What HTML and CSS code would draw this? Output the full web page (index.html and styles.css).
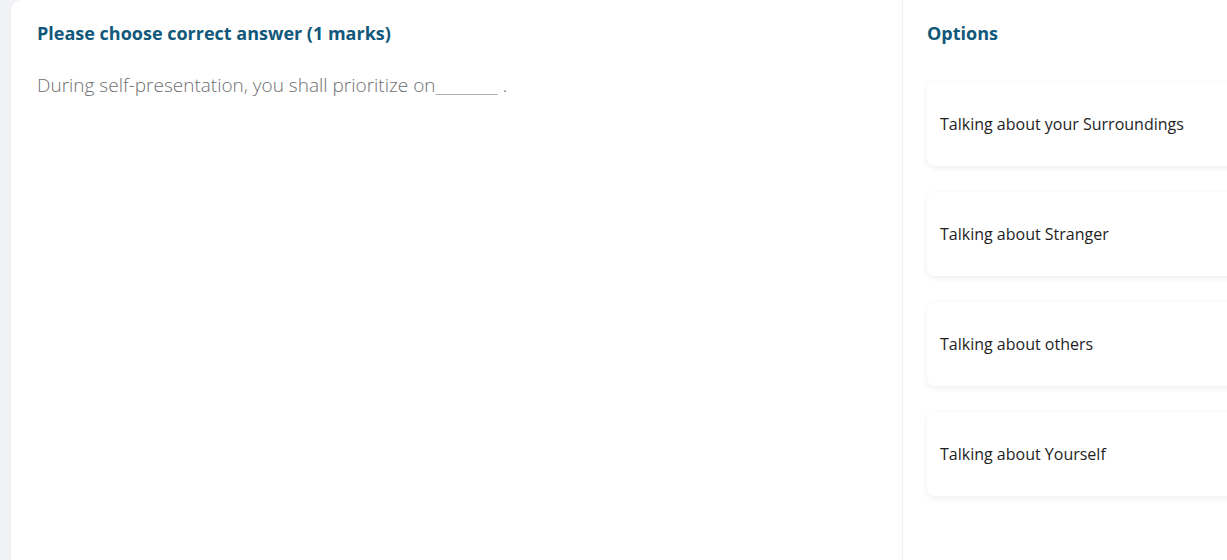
FILE: index.html
```html
<!DOCTYPE html>
<html lang="en">
<head>
  <meta charset="UTF-8">
  <title>Question</title>
  <link rel="stylesheet" href="styles.css">
</head>
<body>

  <div class="quiz">
    <div class="question-panel">
      <h2 class="panel-title">Please choose correct answer (1 marks)</h2>
      <p class="question-text">During self-presentation, you shall prioritize on________ .</p>
    </div>

    <div class="options-panel">
      <h2 class="panel-title">Options</h2>
      <div class="option-list">
        <div class="option">Talking about your Surroundings</div>
        <div class="option">Talking about Stranger</div>
        <div class="option">Talking about others</div>
        <div class="option">Talking about Yourself</div>
      </div>
    </div>
  </div>

</body>
</html>
```

FILE: styles.css
```css
html, body {
  height: 100%;
}
body {
  margin: 0;
  padding-left: 11px;
  background-color: #f0f2f5;
  font-family: "Open Sans", Arial, sans-serif;
  overflow: hidden;
}
.quiz {
  display: flex;
  height: 100%;
  width: 1240px;
  background-color: #fff;
  border-top-left-radius: 10px;
}
.question-panel {
  width: 891px;
  padding: 21px 26px;
  box-sizing: border-box;
}
.options-panel {
  flex: 1;
  border-left: 1px solid #eef0f2;
  padding: 21px 0 0 24px;
}
.panel-title {
  margin: 0;
  font-size: 18px;
  font-weight: 700;
  color: #11587a;
  line-height: 24px;
}
.question-text {
  margin: 28px 0 0;
  font-size: 19px;
  font-weight: 300;
  color: #707070;
  line-height: 24px;
}
.option-list {
  display: flex;
  flex-direction: column;
  gap: 26px;
  margin-top: 37px;
}
.option {
  height: 84px;
  display: flex;
  align-items: center;
  padding-left: 13px;
  border-radius: 8px;
  background-color: #fff;
  box-shadow: 0 2px 6px rgba(0, 0, 0, 0.07);
  font-size: 16px;
  color: #1e1e1e;
}
```
